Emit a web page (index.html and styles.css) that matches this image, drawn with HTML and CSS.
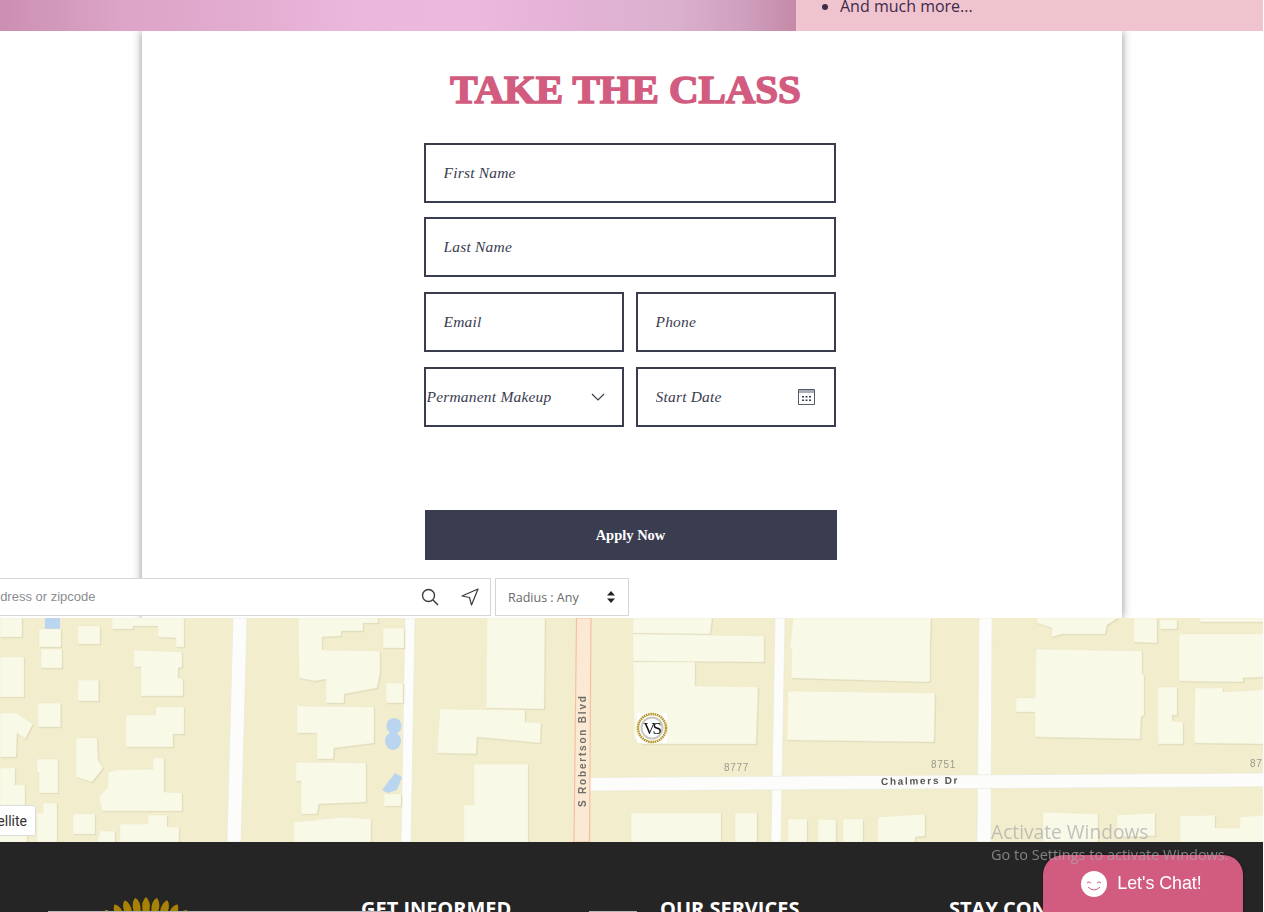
FILE: index.html
```html
<!DOCTYPE html>
<html lang="en">
<head>
<meta charset="utf-8">
<title>Take the Class</title>
<link rel="stylesheet" href="styles.css">
</head>
<body>
<div class="page">
  <section class="hero">
    <div class="hero-image"></div>
    <div class="hero-panel"><ul class="hero-list"><li>And much more...</li></ul></div>
  </section>

  <section class="card">
    <h1 class="title">TAKE THE CLASS</h1>
    <form class="form">
      <input class="field first" type="text" placeholder="First Name">
      <input class="field" type="text" placeholder="Last Name">
      <div class="pair">
        <input class="field" type="text" placeholder="Email">
        <input class="field" type="text" placeholder="Phone">
      </div>
      <div class="pair">
        <div class="control">
          <select class="field select"><option>Permanent Makeup</option></select>
          <svg class="chevron" width="14" height="8" viewBox="0 0 14 8"><path d="M1 1l6 6 6-6" fill="none" stroke="#3a3c50" stroke-width="1.2"/></svg>
        </div>
        <div class="control">
          <input class="field" type="text" placeholder="Start Date">
          <svg class="calendar" width="17" height="16" viewBox="0 0 17 16"><path d="M.5.5h16v15H.5z" fill="#fff" stroke="#555a68"/><path d="M1 1h15v3H1z" fill="#a9adb5"/><path d="M4 7h2v1.500H4zM7.500 7h2v1.500h-2zM11 7h2v1.500h-2zM4 10.500h2V12H4zM7.500 10.500h2V12h-2zM11 10.500h2V12h-2z" fill="#3a3c50"/></svg>
        </div>
      </div>
      <button class="apply" type="button">Apply Now</button>
    </form>
  </section>

  <section class="map">
    <svg class="tiles" width="1263" height="224" viewBox="0 618 1263 224">
      <rect class="land" x="0" y="618" width="1264" height="224"/>
      <g class="roads">
        <polygon points="233,618 247,618 241,842 227,842"/>
        <polygon points="405,618 415,618 411,842 401,842"/>
        <polygon points="775,618 785,618 781,842 771,842"/>
        <polygon points="979,618 992,618 991,842 977,842"/>
        <polygon points="589,777.500 1264,773 1264,786.700 589,791"/>
      </g>
      <polygon class="artery" points="576.500,618 591,618 589.500,842 574,842"/>
      <g class="water">
        <rect x="45" y="618" width="15" height="11"/>
        <ellipse cx="394" cy="726" rx="7.500" ry="8"/>
        <ellipse cx="393" cy="741" rx="8" ry="9"/>
        <rect x="390" y="728" width="7" height="12"/>
        <polygon points="382,790 395,773 402,777 397,790 388,793"/>
      </g>
      <g class="buildings">
        <polygon points="0,618 22,618 22,637 0,637"/>
        <polygon points="39,629 61,629 61,647 39,647"/>
        <polygon points="41,649 62,649 62,668 41,668"/>
        <polygon points="78,626 100,626 100,644 78,644"/>
        <polygon points="112,618 184,618 184,647 176,647 176,638 158,637 158,626 133,626 133,629 112,629"/>
        <polygon points="134,650 182,652 182,667 178,668 178,678 183,679 183,696 141,696 141,667 134,667"/>
        <polygon points="0,657 24,657 24,697 0,697"/>
        <polygon points="78,680 98.700,680 98.700,701 78,701"/>
        <polygon points="38,703 60.700,703 60.700,727 38,727"/>
        <polygon points="0,713 17,713 33,724 25,739 17,733 16,757 0,757"/>
        <polygon points="126,715 156,715 156,707 184,707 184,734 173,734 173,747 126,747"/>
        <polygon points="76,738 97,738 98,760 103,768 92,782 76,777"/>
        <polygon points="37,759 58,759 58,793 39,793 39,773 37,773"/>
        <polygon points="0,768 15,768 15,785 25,785 25,805 0,805"/>
        <polygon points="115,770 153,769 153,758 164,758 164,792 182,793 182,811 102,811 99,797 108,787 108,773"/>
        <polygon points="43,803 57,803 57,842 37,842 37,813 43,813"/>
        <polygon points="73,814 95,814 95,834 73,834"/>
        <polygon points="120,824 148,824 148,815 167,815 167,827 179,827 179,842 120,842"/>
        <polygon points="100,831 115,831 115,842 97,842"/>
        <polygon points="0,810 27,810 27,842 0,842"/>
        <polygon points="298,618 378,618 378,623 363,623 363,631 341,631 341,636 322,637 322,650 380,651 380,673 377,688 344,694 344,703 326,703 326,679 315,681 299,678"/>
        <polygon points="383,628 404,628 404,648 383,648"/>
        <polygon points="386,683 403,683 403,703 386,703"/>
        <polygon points="297,703 300,706 374,707 374,743 334,748 333,759 317,759 317,733 297,733"/>
        <polygon points="296,762 366,763 366,802 319,804 317,814 301,814 301,781 296,781"/>
        <polygon points="384,794 401,794 401,806 384,806"/>
        <polygon points="294,822 316,820 342,817 371,819 371,842 294,842"/>
        <polygon points="487,618 545,618 544,709 486,708"/>
        <polygon points="440,709 525,710 525,722 541,723 540,743 477,737 476,754 437,753"/>
        <polygon points="474,764 528,764 528,842 464,842 464,805 474,805"/>
        <polygon points="633,618 712,618 710,634 633,633"/>
        <polygon points="633,634 764,636 764,662 633,661"/>
        <polygon points="633,662 695,662 695,686 758,687 756,744 642,744 634,739"/>
        <polygon points="631,813 721,813 721,842 631,842"/>
        <polygon points="735,813 757,813 757,842 735,842"/>
        <polygon points="793,618 931,618 930,643 930,681 927,682 791,678 792,650 790,648"/>
        <polygon points="788,691 935,693 934,742 787,740"/>
        <polygon points="788,819 807,819 807,842 788,842"/>
        <polygon points="818,819 836,820 836,842 818,842"/>
        <polygon points="843,819 863,819 863,842 843,842"/>
        <polygon points="878,817 925,814 925,836 915,837 915,842 878,842"/>
        <polygon points="1037,618 1118,618 1107,625 1105,634 1062,634 1052,637 1052,628 1037,623"/>
        <polygon points="1134,618 1157,618 1157,643 1134,642"/>
        <polygon points="1160,620 1177,620 1177,629 1160,629"/>
        <polygon points="1200,618 1264,618 1264,622 1200,622"/>
        <polygon points="1179,634 1264,634 1264,677 1243,678 1243,682 1179,681"/>
        <polygon points="1036,649 1142,651 1142,674 1144,675 1144,715 1141,717 1140,739 1035,737 1035,712 1016,712 1016,698 1035,698"/>
        <polygon points="1158,687 1177,687 1177,715 1172,715 1172,721 1183,722 1183,744 1158,744"/>
        <polygon points="1195,688 1223,688 1223,692 1260,690 1264,688 1264,744 1194,743"/>
        <polygon points="1043,812 1098,814 1098,842 1043,842"/>
        <polygon points="1117,815 1155,813 1155,836 1117,837"/>
        <polygon points="1180,816 1215,815 1215,828 1240,828 1240,817 1264,815 1264,842 1180,842"/>
      </g>
      <text class="label road-label" transform="translate(586 807) rotate(-90)">S Robertson Blvd</text>
      <text class="label road-label chalmers" transform="translate(881 785) rotate(-1)">Chalmers Dr</text>
      <text class="label num" x="724" y="771">8777</text>
      <text class="label num" x="931" y="768">8751</text>
      <text class="label num" x="1250" y="767">87</text>
      <g class="marker">
        <rect x="637" y="713" width="30" height="30" fill="#fff"/>
        <circle cx="652" cy="728" r="14" fill="#fff" stroke="#b8962e" stroke-width="2.500" stroke-dasharray="1.600 .6"/>
        <circle cx="652" cy="728" r="10.500" fill="#fff" stroke="#c9c9c2" stroke-width="2"/>
        <text class="marker-text" x="651" y="734" text-anchor="middle">VS</text>
      </g>
    </svg>

    <div class="finder">
      <div class="search">
        <span class="search-text">Enter address or zipcode</span>
        <svg class="search-icon" width="18" height="18" viewBox="0 0 18 18"><circle cx="7.500" cy="7.500" r="6" fill="none" stroke="#3a3a3a" stroke-width="1.400"/><path d="M12 12l5 5" stroke="#3a3a3a" stroke-width="1.400"/></svg>
        <svg class="locate-icon" width="18" height="18" viewBox="0 0 18 18"><path d="M17 1L1 8l7.500 1.500L10.500 17z" fill="none" stroke="#3a3a3a" stroke-width="1.200" stroke-linejoin="round"/></svg>
      </div>
      <div class="radius">
        <span>Radius : Any</span>
        <svg width="8" height="12" viewBox="0 0 8 12"><path d="M4 0l4 4.500H0zM4 12L0 7.500h8z" fill="#222"/></svg>
      </div>
    </div>
    <div class="satellite">Satellite</div>
  </section>

  <footer class="footer">
    <span class="rule rule-a"></span>
    <span class="rule rule-b"></span>
    <svg class="sun" width="84" height="16" viewBox="0 0 84 16">
      <g fill="#a98205">
        <path d="M42 0q5 4 3.500 14h-7q-1.500-10 3.500-14z"/>
        <path d="M42 0q5 4 3.500 14h-7q-1.500-10 3.500-14z" transform="rotate(-8.750 42 71)"/>
        <path d="M42 0q5 4 3.500 14h-7q-1.500-10 3.500-14z" transform="rotate(8.750 42 71)"/>
        <path d="M42 0q5 4 3.500 14h-7q-1.500-10 3.500-14z" transform="rotate(-17.500 42 71)"/>
        <path d="M42 0q5 4 3.500 14h-7q-1.500-10 3.500-14z" transform="rotate(17.500 42 71)"/>
        <path d="M42 0q5 4 3.500 14h-7q-1.500-10 3.500-14z" transform="rotate(-26.250 42 71)"/>
        <path d="M42 0q5 4 3.500 14h-7q-1.500-10 3.500-14z" transform="rotate(26.250 42 71)"/>
        <path d="M42 0q5 4 3.500 14h-7q-1.500-10 3.500-14z" transform="rotate(-35 42 71)"/>
        <path d="M42 0q5 4 3.500 14h-7q-1.500-10 3.500-14z" transform="rotate(35 42 71)"/>
      </g>
    </svg>
    <div class="foot-cols">
      <h3 class="foot-head informed">GET INFORMED</h3>
      <h3 class="foot-head services">OUR SERVICES</h3>
      <h3 class="foot-head connected">STAY CONNECTED</h3>
    </div>
  </footer>
</div>

<div class="chat">
  <svg width="26" height="26" viewBox="0 0 26 26"><circle cx="13" cy="13" r="13" fill="#fff"/><path d="M6 12q2-2.500 4 0M16 12q2-2.500 4 0M7 16q6 6 12 0" fill="none" stroke="#d25c80" stroke-width="1"/></svg>
  <span>Let's Chat!</span>
</div>

<div class="watermark">
  <div class="wm-title">Activate Windows</div>
  <div class="wm-sub">Go to Settings to activate Windows.</div>
</div>
</body>
</html>
```

FILE: styles.css
```css
* { box-sizing: border-box; }
html, body { margin: 0; padding: 0; height: 912px; overflow: hidden; background: #fff; }
body { font-family: "Open Sans", sans-serif; position: relative; }
.page { width: 1263px; height: 912px; overflow: hidden; }

.hero { display: flex; height: 31px; position: relative; z-index: 2; }
.hero-image { width: 796px; background: linear-gradient(90deg, #cb8fb1 0%, #dca4c6 15%, #e2acd0 30%, #ebb7dc 45%, #ecb8de 60%, #e3b2d6 72%, #dab0cd 85%, #d0a0bf 93%, #c58aa8 100%); }
.hero-panel { flex: 1; background: #f0c4cf; display: flex; align-items: flex-end; }
.hero-list { margin: 0; padding: 0 0 14px 44px; color: #3d2a48; font-size: 16px; line-height: 22px; }

.card { width: 980px; height: 587px; margin: 0 auto; padding-top: 36px; background: #fff; box-shadow: 0 0 9px rgba(0, 0, 0, .45); position: relative; z-index: 1; }
.title { margin: 0 12px 0 0; text-align: center; font-family: "Liberation Serif", serif; font-weight: 700; font-size: 41px; line-height: 44px; letter-spacing: -.1px; color: #d25c80; -webkit-text-stroke: 1.600px #d25c80; }
.form { width: 412px; margin: 32px 0 0 282px; display: flex; flex-direction: column; gap: 15px; }
.first { margin-bottom: -1px; }
.pair { display: grid; grid-template-columns: 200px 200px; gap: 12px; }
.control { position: relative; }
.field { display: block; width: 100%; height: 60px; padding: 0 18px; border: 2px solid #3a3c50; border-radius: 0; background: #fff; font-family: "Liberation Serif", serif; font-style: italic; font-size: 15.500px; letter-spacing: .2px; color: #3a3c50; outline: 0; }
.field::placeholder { color: #3a3c50; opacity: 1; }
.select { appearance: none; padding: 0 0 2px 1px; }
.chevron { position: absolute; left: 167px; top: 26px; }
.calendar { position: absolute; left: 162px; top: 22px; }
.apply { display: block; width: 412px; height: 50px; margin: 68px 0 0 1px; border: 0; background: #3a3c50; color: #fff; font-family: "Liberation Serif", serif; font-weight: 700; font-size: 14.500px; }

.map { height: 224px; position: relative; z-index: 2; }
.tiles { display: block; filter: blur(.35px); }
.land { fill: #f2eecd; }
.roads polygon { fill: #fcfcfa; stroke: #e4e4d6; stroke-width: .5; }
.artery { fill: #fbe9d3; stroke: #f5bfa0; stroke-width: 1.200; }
.water { fill: #b9d5f0; }
.buildings { filter: drop-shadow(1px 1px 0 #dfdbbd); }
.buildings polygon { fill: #f9f9e8; stroke: #ece8cb; stroke-width: .5; }
.label { font-family: "Liberation Sans", sans-serif; font-size: 10px; fill: #9a9a90; letter-spacing: .7px; }
.road-label { fill: #6e6e68; font-weight: 700; letter-spacing: 1.800px; }
.chalmers { fill: #555; letter-spacing: 1.700px; }
.marker-text { font-family: "Liberation Serif", serif; font-size: 17px; fill: #111; letter-spacing: -3px; }

.finder { position: absolute; left: -70px; top: -40px; display: flex; gap: 4px; z-index: 3; }
.search { width: 561px; height: 38px; display: flex; align-items: center; padding: 0 11px 0 20px; background: #fff; border: 1px solid #d6d6d6; }
.search-text { flex: 1; margin-bottom: 2px; font-family: "Liberation Sans", sans-serif; font-size: 13px; color: #8a8e93; }
.search-icon { margin-right: 22px; }
.radius { width: 134px; height: 38px; display: flex; align-items: center; justify-content: space-between; padding: 0 13px 0 12px; background: #fff; border: 1px solid #d6d6d6; font-size: 12.500px; color: #6a6a6a; }

.satellite { position: absolute; left: -40px; top: 187px; width: 76px; height: 31px; padding-right: 8px; text-align: right; background: #fff; border: 1px solid #ddd; border-radius: 3px; font-family: "Roboto", sans-serif; font-size: 14px; line-height: 30px; color: #333; }

.footer { height: 70px; background: #252525; position: relative; overflow: hidden; z-index: 2; }
.rule { position: absolute; top: 69px; height: 1px; background: #b5b5b5; z-index: 1; }
.rule-a { left: 48px; width: 344px; }
.rule-b { left: 589px; width: 48px; }
.sun { position: absolute; left: 104px; top: 55px; }
.foot-cols { display: flex; padding: 53px 0 0 361px; }
.foot-head { margin: 0; font-size: 20px; line-height: 27px; font-weight: 700; color: #fff; white-space: nowrap; }
.informed { width: 299px; }
.services { width: 289px; }

.chat { position: fixed; left: 1043px; top: 855px; width: 200px; height: 57px; display: flex; align-items: center; justify-content: center; gap: 10px; padding: 0 3px 0 0; background: #d25c80; border-radius: 20px 20px 0 0; box-shadow: 0 0 3px rgba(0, 0, 0, .5); color: #fff; font-family: "Liberation Sans", sans-serif; font-size: 17.800px; z-index: 5; }

.watermark { position: fixed; left: 991px; top: 819px; color: rgba(170, 170, 170, .7); z-index: 6; font-family: "Open Sans", sans-serif; pointer-events: none; }
.wm-title { font-size: 19.200px; line-height: 26px; }
.wm-sub { font-size: 14.500px; line-height: 20px; white-space: nowrap; }
```
